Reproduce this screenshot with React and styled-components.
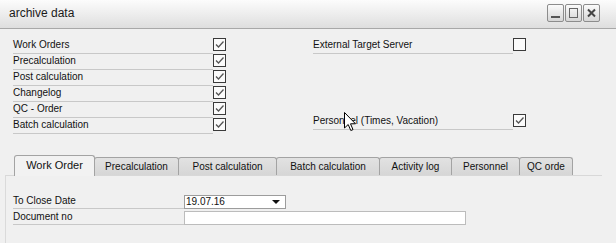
import React from 'react';
import styled, { createGlobalStyle } from 'styled-components';

const GlobalStyle = createGlobalStyle`
  body {
    margin: 0;
    background: #f0f0f0;
    font-family: "Liberation Sans", Arial, sans-serif;
    color: #111;
  }
`;

const Window = styled.div`
  position: relative;
  width: 616px; height: 243px; overflow: hidden;
  display: flex; flex-direction: column;
  background: #f0f0f0;
`;

const TitleBar = styled.div`
  height: 29px; box-sizing: border-box; flex-shrink: 0;
  display: flex; align-items: center;
  padding: 0 16px 0 9px;
  background: linear-gradient(#fcfcfc, #dedede);
  border-bottom: 1px solid #a8a8a8;
`;

const Title = styled.div`font-size: 12px; color: #1a1a1a; margin-top: -2px;`;

const Controls = styled.div`margin-left: auto; display: flex; gap: 1px; margin-top: -3px;`;

const WinButton = styled.div`
  width: 17px; height: 18px; box-sizing: border-box;
  border: 1px solid #8c8c8c; border-radius: 2px;
  background: linear-gradient(#fbfbfb, #d6d6d6);
  display: flex; align-items: center; justify-content: center;
`;

const TopGrid = styled.div`
  display: grid; grid-template-columns: 300px 300px;
  padding: 9px 0 0 13px;
`;

const Column = styled.div`display: flex; flex-direction: column;`;

const Row = styled.div`
  display: flex; align-items: flex-start;
  margin-top: ${({ $gap }) => $gap || 0}px;
`;

const Label = styled.div`
  width: ${({ $w }) => $w}px; height: ${({ $h }) => $h}px;
  box-sizing: border-box;
  border-bottom: 1px solid #c8c8c8;
  font-size: 10px; line-height: ${({ $lh }) => $lh}px;
  white-space: nowrap;
`;

const Box = styled.div`
  width: 13px; height: 13px; box-sizing: border-box;
  border: 1px solid #3a3a3a; background: #fbfbfb;
  display: flex; align-items: center; justify-content: center;
`;

const TabArea = styled.div`
  flex: 1; display: flex; flex-direction: column;
  margin: 21px 14px 0 5px;
`;

const TabStrip = styled.div`
  display: flex; align-items: flex-end;
  height: 20px; padding-left: 9px;
`;

const Tab = styled.div`
  position: relative;
  width: ${({ $w }) => $w}px;
  height: ${({ $active }) => ($active ? 21 : 18)}px;
  margin-bottom: ${({ $active }) => ($active ? -1 : 0)}px;
  margin-left: ${({ $first }) => ($first ? 0 : -1)}px;
  z-index: ${({ $active }) => ($active ? 2 : 1)};
  box-sizing: border-box;
  border: 1px solid #a3a3a3; border-bottom: none;
  border-radius: 3px 3px 0 0;
  background: ${({ $active }) => ($active ? '#f2f2f2' : 'linear-gradient(#e2e2e2, #d6d6d6)')};
  display: flex; align-items: center; justify-content: center;
  padding-bottom: ${({ $active }) => ($active ? 2 : 0)}px;
  font-size: ${({ $active }) => ($active ? 11 : 10)}px;
  white-space: nowrap; overflow: hidden;
`;

const Panel = styled.div`
  flex: 1;
  border-top: 1px solid #d8d8d8;
  border-left: 1px solid #dadada;
  padding: 19px 0 0 7px;
  display: flex; flex-direction: column; gap: 2px;
`;

const FormRow = styled.div`display: flex; align-items: flex-start;`;

const Field = styled.div`
  position: relative;
  width: ${({ $w }) => $w}px; height: 14px; box-sizing: border-box;
  border: 1px solid ${({ $dark }) => ($dark ? '#9c9c9c' : '#bcbcbc')};
  background: #fff;
  font-size: 10px; line-height: 12px; padding-left: 1px;
`;

const Arrow = styled.div`
  position: absolute; right: 5px; top: 4px;
  width: 0; height: 0;
  border-left: 4px solid transparent; border-right: 4px solid transparent;
  border-top: 4px solid #111;
`;

const Cursor = styled.svg`
  position: absolute; left: 344px; top: 112px;
`;

const Check = () => (
  <svg width="11" height="11" viewBox="0 0 11 11">
    <polyline points="2,5.5 4.5,8 9.5,2.5" fill="none" stroke="#555" strokeWidth="1.3" />
  </svg>
);

const leftRows = ['Work Orders', 'Precalculation', 'Post calculation', 'Changelog', 'QC - Order', 'Batch calculation'];

const tabs = [
  { name: 'Work Order', w: 81 },
  { name: 'Precalculation', w: 85 },
  { name: 'Post calculation', w: 99 },
  { name: 'Batch calculation', w: 104 },
  { name: 'Activity log', w: 73 },
  { name: 'Personnel', w: 69 },
  { name: 'QC orde', w: 54 },
];

const CheckRow = ({ label, checked, gap }) => (
  <Row $gap={gap}>
    <Label $w={200} $h={16} $lh={14}>{label}</Label>
    <Box>{checked && <Check />}</Box>
  </Row>
);

export default function App() {
  return (
    <Window>
      <GlobalStyle />
      <TitleBar>
        <Title>archive data</Title>
        <Controls>
          <WinButton>
            <svg width="11" height="12" viewBox="0 0 11 12"><rect x="1" y="9" width="9" height="2" fill="#555" /></svg>
          </WinButton>
          <WinButton>
            <svg width="11" height="12" viewBox="0 0 11 12"><rect x="1.5" y="1.5" width="8" height="9" fill="none" stroke="#666" /></svg>
          </WinButton>
          <WinButton>
            <svg width="11" height="12" viewBox="0 0 11 12"><path d="M2 2.5 L9 9.5 M9 2.5 L2 9.5" stroke="#444" strokeWidth="2" /></svg>
          </WinButton>
        </Controls>
      </TitleBar>

      <TopGrid>
        <Column>
          {leftRows.map((r) => <CheckRow key={r} label={r} checked />)}
        </Column>
        <Column>
          <CheckRow label="External Target Server" />
          <CheckRow label="Personnel (Times, Vacation)" checked gap={60} />
        </Column>
      </TopGrid>

      <TabArea>
        <TabStrip>
          {tabs.map((t, i) => (
            <Tab key={t.name} $w={t.w} $active={i === 0} $first={i === 0}>{t.name}</Tab>
          ))}
        </TabStrip>
        <Panel>
          <FormRow>
            <Label $w={171} $h={14} $lh={12}>To Close Date</Label>
            <Field $w={102} $dark>19.07.16<Arrow /></Field>
          </FormRow>
          <FormRow>
            <Label $w={171} $h={14} $lh={12}>Document no</Label>
            <Field $w={282} />
          </FormRow>
        </Panel>
      </TabArea>

      <Cursor width="13" height="20" viewBox="0 0 13 20">
        <path d="M0.5 0.5 L0.5 16 L4.2 12.5 L6.8 18.5 L9 17.6 L6.5 11.8 L11.5 11.8 Z" fill="#fff" stroke="#000" strokeWidth="1" strokeLinejoin="miter" />
      </Cursor>
    </Window>
  );
}
